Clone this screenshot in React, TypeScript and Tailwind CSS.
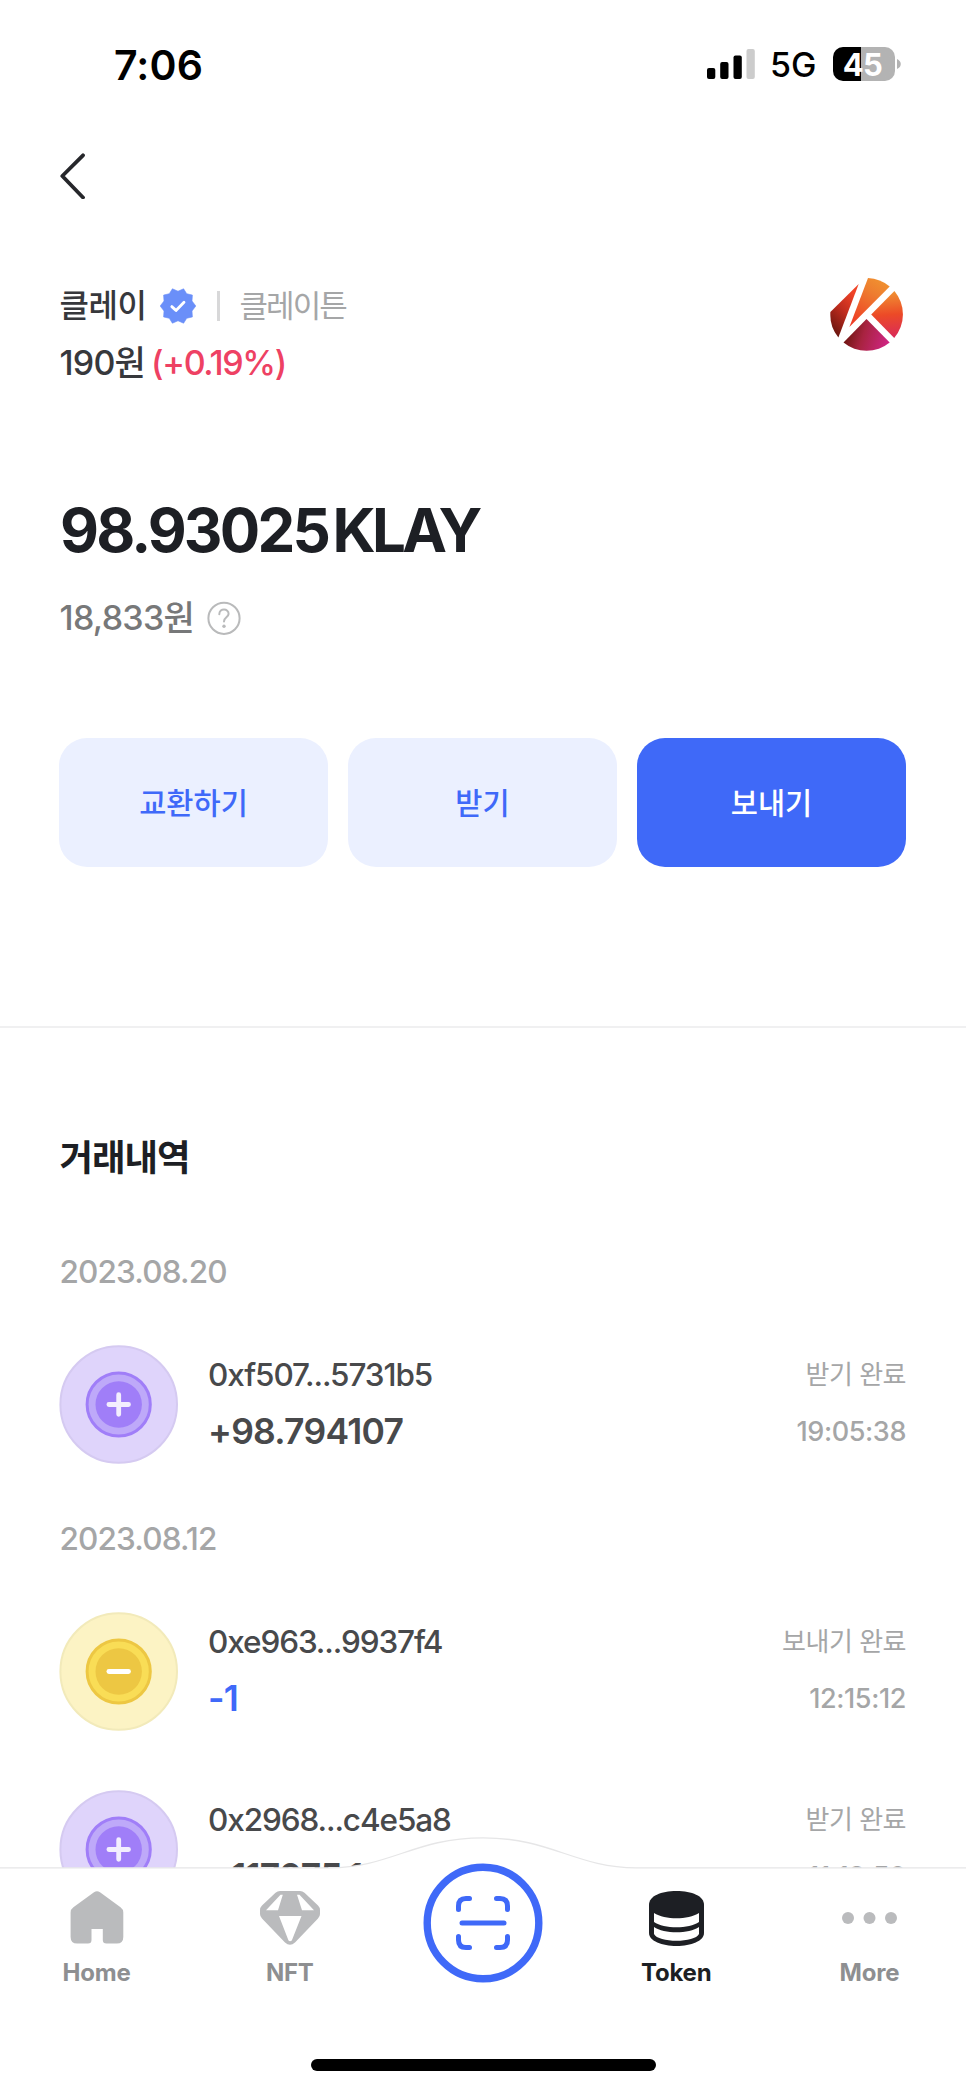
import React from "react";

const SANS = "font-['Inter','Noto_Sans_CJK_KR',sans-serif]";

function StatusBar() {
  return (
    <header className="flex h-[128px] items-center justify-between pr-[65px] pl-[114px] text-black">
      <span className="pt-[1px] text-[41px] leading-[48px] font-semibold tracking-[0.1px]">7:06</span>
      <div className="flex items-center">
        <svg width="48" height="30" viewBox="0 0 48 30" aria-hidden="true">
          <rect x="0" y="19" width="8.3" height="11" rx="2" />
          <rect x="13.2" y="13" width="8.3" height="17" rx="2" />
          <rect x="26.5" y="6.5" width="8.3" height="23.5" rx="2" />
          <rect x="39.5" y="0" width="8.3" height="30" rx="2" fill="#cccccc" />
        </svg>
        <span className="ml-[15px] w-[47px] pt-[2px] text-[34px] leading-[40px] font-[450] whitespace-nowrap">5G</span>
        <div className="ml-[16px] flex h-[34px] w-[62px] items-center justify-center rounded-[10px] bg-linear-to-r from-black from-45% to-[#b3b3b3] to-45%">
          <span className="pt-[1px] pr-[3px] text-[31px] leading-[34px] font-bold tracking-[-0.6px] text-white">45</span>
        </div>
        <svg className="ml-[2px]" width="4" height="10" viewBox="0 0 4 10" aria-hidden="true">
          <path d="M0 0C5 2 5 8 0 10Z" fill="#b3b3b3" />
        </svg>
      </div>
    </header>
  );
}

function VerifiedBadge() {
  return (
    <svg width="36" height="36" viewBox="-18 -18 36 36" aria-hidden="true">
      <path
        d="M-5.6 -17.2 L0 -14.8 L5.6 -17.2 L8.7 -12.3 L14.4 -10.9 L14 -5 L17.8 0 L14 5 L14.4 10.9 L8.7 12.3 L5.6 17.2 L0 14.8 L-5.6 17.2 L-8.7 12.3 L-14.4 10.9 L-14 5 L-17.8 0 L-14 -5 L-14.4 -10.9 L-8.7 -12.3Z"
        fill="#6a8ff9"
        stroke="#6a8ff9"
        strokeWidth="0.6"
        strokeLinejoin="round"
      />
      <path d="M-6.2 .6L-2 4.4L6 -3.8" fill="none" stroke="#fff" strokeWidth="2.8" strokeLinecap="round" strokeLinejoin="round" />
    </svg>
  );
}

function KlayLogo() {
  return (
    <svg width="73" height="73" viewBox="830.3 278 73 73" aria-hidden="true">
      <defs>
        <linearGradient id="kLeft" x1="0.7" y1="0.1" x2="0.2" y2="1">
          <stop offset="0" stopColor="#f04427" />
          <stop offset="0.45" stopColor="#c02c1e" />
          <stop offset="1" stopColor="#64140e" />
        </linearGradient>
        <linearGradient id="kTop" x1="0.7" y1="0" x2="0.2" y2="1">
          <stop offset="0" stopColor="#f09030" />
          <stop offset="0.3" stopColor="#ee7c2f" />
          <stop offset="1" stopColor="#ee3a25" />
        </linearGradient>
        <linearGradient id="kRight" x1="0.6" y1="0" x2="0.65" y2="1">
          <stop offset="0" stopColor="#f09433" />
          <stop offset="0.5" stopColor="#ec4a27" />
          <stop offset="1" stopColor="#d92a5a" />
        </linearGradient>
        <linearGradient id="kBottom" x1="0.05" y1="0.4" x2="1" y2="0.6">
          <stop offset="0" stopColor="#6c140e" />
          <stop offset="0.4" stopColor="#a82340" />
          <stop offset="1" stopColor="#cf2583" />
        </linearGradient>
      </defs>
      <path d="M859 284L830.7 312A36.3 36.3 0 0 0 838.7 337.5Z" fill="url(#kLeft)" />
      <path d="M868.3 278A36.3 36.3 0 0 1 890 286.5L849.7 327Z" fill="url(#kTop)" />
      <path d="M894.7 291A36.3 36.3 0 0 1 894.5 338L871.5 314.5Z" fill="url(#kRight)" />
      <path d="M866.8 319L890 342.5A36.3 36.3 0 0 1 843.8 342.5Z" fill="url(#kBottom)" />
    </svg>
  );
}

function TokenHeader() {
  return (
    <section className="flex justify-between pr-[63px] pl-[59.5px]">
      <div>
        <div className="flex h-[56px] items-center leading-[56px]">
          <h1 className="w-[100.5px] text-[32px] font-medium tracking-[-0.5px] whitespace-nowrap text-[#37383c]">클레이</h1>
          <VerifiedBadge />
          <i className="ml-[21px] h-[30px] w-[2.5px] bg-[#d8d8d9]" />
          <span className="ml-[20px] text-[31px] tracking-[-1.9px] text-[#a5a6a7]">클레이튼</span>
        </div>
        <p className="mt-[1px] flex h-[56px] text-[34px] leading-[56px] font-medium">
          <span className="w-[91.5px] tracking-[-0.8px] whitespace-nowrap text-[#37383c]">190원</span>
          <span className="tracking-[-1.3px] text-[#ee4163]">(+0.19%)</span>
        </p>
      </div>
      <KlayLogo />
    </section>
  );
}

function Balance() {
  return (
    <section className="mt-[99px] px-[59.5px]">
      <p className="flex h-[80px] pl-[0.5px] text-[60px] leading-[80px] font-bold text-[#1d1f24]">
        <span className="w-[272.5px] tracking-[-2.8px] whitespace-nowrap">98.93025</span>
        <span className="tracking-[-3.7px]">KLAY</span>
      </p>
      <div className="mt-[27px] flex h-[42px] items-center text-[#777879]">
        <span className="w-[147.5px] text-[34px] leading-[42px] font-[450] tracking-[-0.7px] whitespace-nowrap">18,833원</span>
        <svg width="34" height="34" viewBox="0 0 34 34" fill="none" stroke="#b9babb" strokeWidth="2" aria-hidden="true">
          <circle cx="17" cy="17.3" r="15.6" />
          <path d="M12.3 13.2C12.4 6.7 21.8 7.2 21.6 12.9C21.5 16.4 17 16.4 17 20.4" strokeLinecap="round" />
          <circle cx="17" cy="25.3" r="1.7" fill="#b9babb" stroke="none" />
        </svg>
      </div>
    </section>
  );
}

function Actions() {
  const base = "h-[129px] rounded-[28px] pt-[1px] text-[29.5px] font-medium";
  return (
    <section className="mt-[99px] grid grid-cols-3 gap-[20px] pr-[60px] pl-[59px]">
      <button className={`${base} bg-[#ebf0ff] text-[#3f69f9]`}>교환하기</button>
      <button className={`${base} bg-[#ebf0ff] text-[#3f69f9]`}>받기</button>
      <button className={`${base} bg-[#3f69f8] text-white`}>보내기</button>
    </section>
  );
}

function CoinIcon({ kind }: { kind: "in" | "out" }) {
  const c =
    kind === "in"
      ? { bg: "#dfd4fb", edge: "#d5caf1", ring: "#a07ef8", mid: "#bea9f9", sign: "#f3eefe" }
      : { bg: "#fcf3c4", edge: "#f2eaba", ring: "#edc743", mid: "#f9dd56", sign: "#ffffff" };
  return (
    <svg width="120" height="119" viewBox="-59.7 -59.5 120 119" aria-hidden="true">
      <circle r="58.3" fill={c.bg} stroke={c.edge} strokeWidth="2" />
      <circle r="31.6" fill={c.mid} stroke={c.ring} strokeWidth="3" />
      <circle r="23.2" fill={c.ring} />
      <path d={kind === "in" ? "M-9.8 0H9.8M0 -9.8V9.8" : "M-9.8 0H9.8"} stroke={c.sign} strokeWidth="4.8" strokeLinecap="round" />
    </svg>
  );
}

type Tx = { kind: "in" | "out"; address: string; amount: string; status: string; time: string };

function TxRow({ tx }: { tx: Tx }) {
  return (
    <li className="flex h-[119px]">
      <CoinIcon kind={tx.kind} />
      <div className="ml-[29px] flex-1 pt-[1px]">
        <p className="h-[57px] text-[31.5px] leading-[58px] font-medium tracking-[-1.1px] text-[#48494b]">{tx.address}</p>
        <p className={`h-[57px] text-[35.5px] leading-[58px] font-semibold tracking-[-0.75px] ${tx.kind === "in" ? "text-[#48494b]" : "text-[#3f69f9]"}`}>
          {tx.amount}
        </p>
      </div>
      <div className="pt-[2px] text-right text-[#a5a6a7]">
        <p className="h-[57px] text-[26px] leading-[56px] tracking-[-0.5px]">{tx.status}</p>
        <p className="h-[57px] text-[27px] leading-[55px] font-[450] tracking-[-0.4px]">{tx.time}</p>
      </div>
    </li>
  );
}

const GROUPS: { date: string; items: Tx[] }[] = [
  {
    date: "2023.08.20",
    items: [{ kind: "in", address: "0xf507...5731b5", amount: "+98.794107", status: "받기 완료", time: "19:05:38" }],
  },
  {
    date: "2023.08.12",
    items: [
      { kind: "out", address: "0xe963...9937f4", amount: "-1", status: "보내기 완료", time: "12:15:12" },
      { kind: "in", address: "0x2968...c4e5a8", amount: "+117075.1", status: "받기 완료", time: "11:18:50" },
    ],
  },
];

function History() {
  return (
    <section className="mt-[159px] border-t-2 border-[#f0f0f1] pt-[106px] pr-[60px] pl-[59px]">
      <h2 className="h-[48px] pl-[0.5px] text-[36.5px] leading-[48px] font-bold tracking-[-1.1px] text-[#1d1f24]">거래내역</h2>
      {GROUPS.map((g, i) => (
        <div key={g.date} className={i === 0 ? "mt-[69px]" : "mt-[54px]"}>
          <h3 className="h-[40px] pl-[0.5px] text-[31.5px] leading-[41px] font-[550] tracking-[-0.85px] text-[#a5a6a7]">{g.date}</h3>
          <ul className="mt-[54px] flex flex-col gap-[59px]">
            {g.items.map((tx) => (
              <TxRow key={tx.address} tx={tx} />
            ))}
          </ul>
        </div>
      ))}
    </section>
  );
}

function HomeIcon() {
  return (
    <svg width="54" height="54" viewBox="0 0 54 54" fill="#babbbd" aria-hidden="true">
      <path d="M24 1.2Q27 -.8 30 1.2L50.5 16.2Q53.3 18.2 53.3 21.5V46Q53.3 52.6 46.7 52.6H36.5Q32.8 52.6 32.8 49V38H21.5V49Q21.5 52.6 18 52.6H7.2Q.6 52.6 .6 46V21.5Q.6 18.2 3.4 16.2Z" />
    </svg>
  );
}

function GemIcon() {
  return (
    <svg width="60" height="54" viewBox="0 0 60 54" aria-hidden="true">
      <path
        d="M20 0H40Q42.5 0 44.5 1.8L58 14.5Q60 16.5 60 19V23Q60 25.5 58 27.5L35 51.5Q30 56 25 51.5L2 27.5Q0 25.5 0 23V19Q0 16.5 2 14.5L15.5 1.8Q17.5 0 20 0Z"
        fill="#babbbd"
      />
      <path d="M20.5 3.7H22.8L18 19.3H6Z M37 3.7H39.5L54 19.3H42Z M19 25H41.5L31.8 49.5Q30 51 28.5 49.5Z" fill="#fff" />
    </svg>
  );
}

function ScanButton() {
  return (
    <svg width="120" height="120" viewBox="-60 -60 120 120" fill="none" stroke="#3f69f8" strokeLinecap="round" aria-hidden="true">
      <circle r="55.8" fill="#fff" strokeWidth="7.4" />
      <g strokeWidth="5">
        <path d="M-24.5 -13.5V-17Q-24.5 -24.5 -17 -24.5H-13.5" />
        <path d="M24.5 -13.5V-17Q24.5 -24.5 17 -24.5H13.5" />
        <path d="M-24.5 13.5V17Q-24.5 24.5 -17 24.5H-13.5" />
        <path d="M24.5 13.5V17Q24.5 24.5 17 24.5H13.5" />
        <path d="M-21 0H21" />
      </g>
    </svg>
  );
}

function TokenIcon() {
  return (
    <svg width="55" height="55" viewBox="0 0 55 55" aria-hidden="true">
      <path d="M0 14C0 5 12 0 27.5 0S55 5 55 14V42C55 50 42 55 27.5 55S0 50 0 42Z" fill="#1d1f24" />
      <path d="M5 22C16 29 39 29 50 22V31C40 38 15 38 5 31Z M5 36C15 43 40 43 50 36V43C46 52 9 52 5 43Z" fill="#fff" />
    </svg>
  );
}

function MoreIcon() {
  return (
    <svg width="55" height="12" viewBox="0 0 55 12" fill="#babbbd" aria-hidden="true">
      <circle cx="6" cy="6" r="6" />
      <circle cx="27.5" cy="6" r="6" />
      <circle cx="49" cy="6" r="6" />
    </svg>
  );
}

function TabItem({ label, active, children }: { label: string; active?: boolean; children: React.ReactNode }) {
  return (
    <a className={`flex flex-col items-center text-[24px] font-bold ${active ? "text-[#1d1f24]" : "text-[#8e8f91]"}`}>
      <span className="flex h-[56px] items-center">{children}</span>
      <span className="mt-[12px] leading-[30px] tracking-[-0.2px]">{label}</span>
    </a>
  );
}

function TabBar() {
  return (
    <nav className="absolute inset-x-0 bottom-0 h-[254px] overflow-hidden">
      <svg className="absolute inset-0" width="966" height="254" viewBox="0 0 966 254" aria-hidden="true">
        <path
          d="M-2 30.8H330C390 30.8 415 .8 483 .8S576 30.8 636 30.8H968V256H-2Z"
          fill="#fff"
          stroke="#e6e6e7"
          strokeWidth="1.3"
        />
      </svg>
      <div className="relative grid grid-cols-5 pt-[53px]">
        <TabItem label="Home"><HomeIcon /></TabItem>
        <TabItem label="NFT"><GemIcon /></TabItem>
        <div className="-mt-[27.5px] flex h-[120px] justify-center"><ScanButton /></div>
        <TabItem label="Token" active><TokenIcon /></TabItem>
        <TabItem label="More"><MoreIcon /></TabItem>
      </div>
      <div className="relative mx-auto mt-[71px] h-[12px] w-[345px] rounded-full bg-black" />
    </nav>
  );
}

export default function App() {
  return (
    <div className={`relative h-[2091px] w-[966px] overflow-hidden bg-white ${SANS}`}>
      <StatusBar />
      <div className="h-[150px] pt-[25px] pl-[59.5px]">
        <svg width="25" height="46" viewBox="0 0 25 46" fill="none" stroke="#26272b" strokeWidth="3.8" strokeLinecap="round" strokeLinejoin="round" aria-hidden="true">
          <path d="M23 2.3L2.3 23L23 44.5" />
        </svg>
      </div>
      <TokenHeader />
      <Balance />
      <Actions />
      <History />
      <TabBar />
    </div>
  );
}
